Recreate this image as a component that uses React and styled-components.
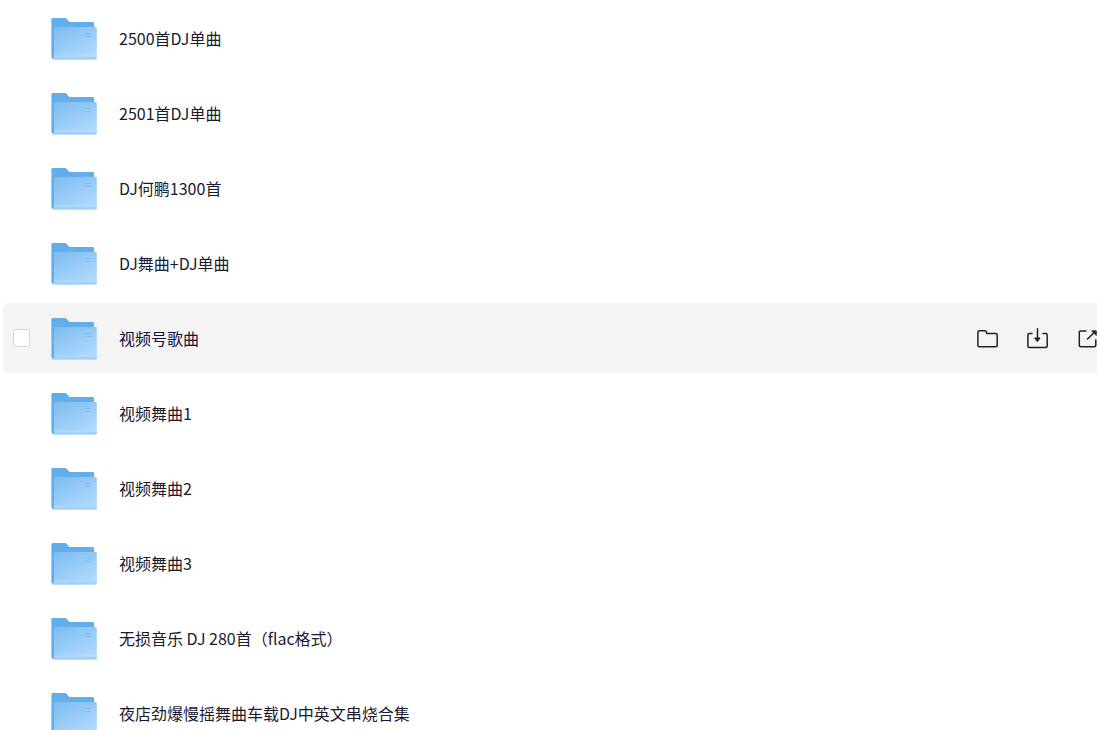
import { useState } from "react";
import styled, { createGlobalStyle } from "styled-components";

const FOLDERS = [
  "2500首DJ单曲",
  "2501首DJ单曲",
  "DJ何鹏1300首",
  "DJ舞曲+DJ单曲",
  "视频号歌曲",
  "视频舞曲1",
  "视频舞曲2",
  "视频舞曲3",
  "无损音乐 DJ 280首（flac格式）",
  "夜店劲爆慢摇舞曲车载DJ中英文串烧合集",
];

const FolderArt = () => (
  <Art viewBox="0 0 48 48" aria-hidden="true">
    <defs>
      <linearGradient id="folder-front" x1="0.1" y1="0" x2="0.8" y2="1">
        <stop offset="0" stopColor="#7dbcf0" />
        <stop offset="1" stopColor="#b2dafe" />
      </linearGradient>
    </defs>
    <path
      d="M1.4 5.2Q1.4 4 2.6 4H15.2Q16 4 16.6 4.7L18.6 7.3Q19.1 8 20 8H43Q44 8 44 9V44H2.6Q1.4 44 1.4 43Z"
      fill="#62aeea"
    />
    <path
      d="M4 14Q4 13 5 13H45.6Q46.8 13 46.8 14.2V44Q46.8 45.4 45.4 45.4H3Q1.8 45.4 1.6 44.2H4Z"
      fill="url(#folder-front)"
    />
    <path
      d="M4 42.8H46.8V44Q46.8 45.4 45.4 45.4H3Q1.8 45.4 1.6 44.2H4Z"
      fill="#a2d0fa"
    />
    <path d="M4 42H46.8" stroke="#b9defe" strokeWidth="2" opacity="0.5" />
    <path
      d="M34.6 19.5H41M34.6 22.5H41"
      stroke="#86bdee"
      strokeWidth="1"
    />
  </Art>
);

const OpenIcon = () => (
  <Glyph viewBox="0 0 24 24" aria-hidden="true">
    <path d="M1.9 6.3Q1.9 4.8 3.4 4.8H9Q10 4.8 10.3 5.8L10.8 7.5H19.8Q21.2 7.5 21.2 9V19.2Q21.2 20.7 19.8 20.7H3.4Q1.9 20.7 1.9 19.2Z" />
  </Glyph>
);

const DownloadIcon = () => (
  <Glyph viewBox="0 0 24 24" aria-hidden="true">
    <path d="M6 7.5H3.4Q1.9 7.5 1.9 9V20.1Q1.9 21.6 3.4 21.6H19.8Q21.2 21.6 21.2 20.1V9Q21.2 7.5 19.8 7.5H17" />
    <path d="M11.5 2.8V12" />
    <path d="M9 12H14L11.5 15.4Z" fill="currentColor" strokeWidth="1" />
  </Glyph>
);

const ShareIcon = () => (
  <Glyph viewBox="0 0 24 24" aria-hidden="true">
    <path d="M10 4.9H4.8Q3.3 4.9 3.3 6.4V19.2Q3.3 20.7 4.8 20.7H18.3Q19.8 20.7 19.8 19.2V14" />
    <path d="M11.5 13L18.5 6.2" />
    <path d="M16 4.9H20.2V9.1Z" fill="currentColor" strokeWidth="1" />
  </Glyph>
);

const FolderRow = ({ name, active, checked, onActivate, onToggle }) => (
  <Row $active={active} onMouseEnter={onActivate}>
    <Checkbox
      type="checkbox"
      aria-label={name}
      checked={checked}
      onChange={onToggle}
      $shown={active || checked}
    />
    <FolderArt />
    <Name href="#" $active={active}>
      {name}
    </Name>
    {active && (
      <Actions>
        <Action type="button" aria-label="打开">
          <OpenIcon />
        </Action>
        <Action type="button" aria-label="下载">
          <DownloadIcon />
        </Action>
        <Action type="button" aria-label="分享">
          <ShareIcon />
        </Action>
      </Actions>
    )}
  </Row>
);

const App = () => {
  const [active, setActive] = useState(4);
  const [checked, setChecked] = useState([]);

  const toggle = (index) =>
    setChecked((prev) =>
      prev.includes(index) ? prev.filter((i) => i !== index) : [...prev, index]
    );

  return (
    <>
      <GlobalStyle />
      <Page>
        <List>
          {FOLDERS.map((name, index) => (
            <FolderRow
              key={name}
              name={name}
              active={index === active}
              checked={checked.includes(index)}
              onActivate={() => setActive(index)}
              onToggle={() => toggle(index)}
            />
          ))}
        </List>
      </Page>
    </>
  );
};

const GlobalStyle = createGlobalStyle`
  *, *::before, *::after {
    box-sizing: border-box;
  }

  body {
    margin: 0;
    background: #fff;
    font-family: "Noto Sans CJK SC", sans-serif;
  }
`;

const Page = styled.main`
  height: 100vh;
  overflow: hidden;
`;

/* The rows run on past the right edge of the window */
const List = styled.ul`
  display: flex;
  flex-direction: column;
  gap: 5px;
  margin: 0 -12px 0 0;
  padding: 3px 0 0 3px;
  list-style: none;
`;

const Row = styled.li`
  display: flex;
  flex-shrink: 0;
  align-items: center;
  height: 70px;
  padding: 0 9px 0 10px;
  border-radius: 5px;
  background: ${(props) => (props.$active ? "#f4f4f4" : "transparent")};
`;

const Checkbox = styled.input`
  appearance: none;
  width: 17px;
  height: 18px;
  margin: 0 20px 0 0;
  border: 1px solid #d9d9d9;
  border-radius: 2px;
  background: #fff;
  visibility: ${(props) => (props.$shown ? "visible" : "hidden")};

  &:checked {
    border-color: #62aeea;
    background: #62aeea;
  }
`;

const Art = styled.svg`
  flex-shrink: 0;
  width: 48px;
  height: 48px;
  margin-right: 21px;
`;

const Name = styled.a`
  flex: 1;
  color: ${(props) => (props.$active ? "#12123f" : "#1a1a2e")};
  font-size: 16px;
  line-height: 24px;
  text-decoration: none;
`;

const Actions = styled.div`
  display: flex;
  gap: 26px;
`;

const Action = styled.button`
  display: flex;
  padding: 0;
  border: 0;
  background: none;
  color: #222226;
  cursor: pointer;
`;

const Glyph = styled.svg`
  width: 24px;
  height: 24px;
  fill: none;
  stroke: currentColor;
  stroke-width: 1.5;
  stroke-linecap: round;
  stroke-linejoin: round;
`;

export default App;
